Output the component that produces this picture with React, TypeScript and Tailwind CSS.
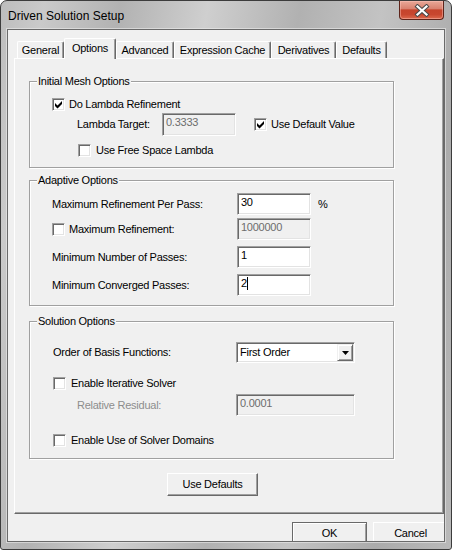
import React from 'react';

const Check = ({ checked = false }: { checked?: boolean }) => (
    <span className="relative block w-[13px] h-[13px] shrink-0 bg-white border border-t-[#a0a0a0] border-l-[#a0a0a0] border-b-white border-r-white shadow-[inset_1px_1px_0_#696969,inset_-1px_-1px_0_#e3e3e3]">
        {checked && (
            <svg className="absolute left-0 top-0" width="11" height="11" viewBox="0 0 11 11">
                <polygon points="2,4 4.5,6.5 9,2 9,5 4.5,9.5 2,7" fill="#000" />
            </svg>
        )}
    </span>
);

const Field = ({ value, className, disabled = false, caret = false }: { value: string; className: string; disabled?: boolean; caret?: boolean }) => (
    <div
        className={`flex items-start pl-[2px] leading-[14px] border border-t-[#a0a0a0] border-l-[#a0a0a0] border-b-white border-r-white shadow-[inset_1px_1px_0_#696969,inset_-1px_-1px_0_#e3e3e3] ${className} ${
            disabled ? 'bg-[#f0f0f0] text-[#6d6d6d]' : 'bg-white text-black'
        }`}
    >
        <span className="pt-[1px] pl-[1px]">{value}</span>
        {caret && <span className="mt-[2px] w-[1px] h-[13px] bg-black" />}
    </div>
);

const Button = ({ label, className, isDefault = false }: { label: string; className: string; isDefault?: boolean }) => (
    <div
        className={`flex items-center justify-center shrink-0 bg-[#f0f0f0] text-black border ${
            isDefault
                ? 'border-[#696969] shadow-[inset_1px_1px_0_#fff,inset_-1px_-1px_0_#a0a0a0]'
                : 'border-t-white border-l-white border-b-[#696969] border-r-[#696969] shadow-[inset_-1px_-1px_0_#a0a0a0]'
        } ${className}`}
    >
        {label}
    </div>
);

const Group = ({ title, className, children }: { title: string; className: string; children: React.ReactNode }) => (
    <div className={`relative ml-[14px] w-[365px] border border-[#a0a0a0] shadow-[inset_1px_1px_0_#fff,1px_1px_0_#fff] flex flex-col ${className}`}>
        <span className="absolute -top-[7px] left-[7px] px-[1px] bg-[#f0f0f0] leading-[13px]">{title}</span>
        {children}
    </div>
);

const tabs = [
    { label: 'General', w: 'w-[47px]' },
    { label: 'Options', w: 'w-[52px]', active: true },
    { label: 'Advanced', w: 'w-[58px]' },
    { label: 'Expression Cache', w: 'w-[97px]' },
    { label: 'Derivatives', w: 'w-[65px]' },
    { label: 'Defaults', w: 'w-[51px]' },
];

export default function App() {
    return (
        <div className="w-[452px] h-[550px] overflow-hidden bg-white">
            <div className="w-[452px] h-[550px] flex flex-col border border-[#3c3c3c] rounded-t-[7px] rounded-b-[3px] bg-[linear-gradient(100deg,#bdbdbd_0%,#cacaca_8%,#b2b2b2_22%,#cfcfcf_38%,#b1b1b1_55%,#c3c3c3_70%,#ababab_86%,#b9b9b9_100%)] font-['Liberation_Sans',Arial,sans-serif] text-[11px] tracking-[-0.25px] text-black">
                {/* title bar */}
                <div className="h-[28px] shrink-0 flex items-start justify-between">
                    <span className="ml-[7px] mt-[7px] text-[12px] leading-[16px] tracking-normal text-black">Driven Solution Setup</span>
                    <div className="mr-[7px] w-[45px] h-[19px] flex items-center justify-center rounded-b-[4px] border border-t-0 border-[#5e241a] bg-[linear-gradient(180deg,#e9a898_0%,#d98270_42%,#c5442c_50%,#c8472f_75%,#db6a4e_100%)] shadow-[inset_0_0_0_1px_rgba(255,200,190,0.45)]">
                        <svg width="16" height="13" viewBox="0 0 16 13">
                            <path d="M3.5 2.5 L12.5 10.5 M12.5 2.5 L3.5 10.5" stroke="#4a4a4a" strokeWidth="4.2" strokeLinecap="square" />
                            <path d="M3.5 2.5 L12.5 10.5 M12.5 2.5 L3.5 10.5" stroke="#fff" strokeWidth="2.2" strokeLinecap="square" />
                        </svg>
                    </div>
                </div>

                {/* client area */}
                <div className="flex-1 mx-[6px] mb-[7px] border border-[#6a6a6a] bg-[#f0f0f0] overflow-hidden flex flex-col pt-[8px] shadow-[0_0_0_1px_rgba(235,235,235,0.6)]">
                    {/* tab headers */}
                    <div className="h-[20px] pl-[9px] flex items-end shrink-0">
                        {tabs.map((t) =>
                            t.active ? (
                                <div
                                    key={t.label}
                                    className={`relative z-10 -mb-[1px] h-[21px] ${t.w} shrink-0 bg-[#f0f0f0] border-t border-l border-r border-t-white border-l-white border-r-[#696969] rounded-t-[2px] shadow-[inset_-1px_0_0_#a0a0a0] text-center leading-[14px] pt-[2px]`}
                                >
                                    {t.label}
                                </div>
                            ) : (
                                <div
                                    key={t.label}
                                    className={`h-[17px] ${t.w} shrink-0 border-t border-l border-r border-t-white border-l-white border-r-[#696969] rounded-t-[2px] shadow-[inset_-1px_0_0_#a0a0a0] text-center leading-[14px] pt-[1px]`}
                                >
                                    {t.label}
                                </div>
                            )
                        )}
                    </div>

                    {/* tab panel */}
                    <div className="ml-[6px] h-[456px] shrink-0 bg-[#f0f0f0] border border-t-white border-l-white border-b-[#696969] border-r-[#696969] shadow-[inset_-1px_-1px_0_#a0a0a0] flex flex-col">
                        <Group title="Initial Mesh Options" className="mt-[22px] h-[87px]">
                            <div className="mt-[15px] h-[14px] pl-[22px] flex items-center">
                                <Check checked />
                                <span className="ml-[4px]">Do Lambda Refinement</span>
                            </div>
                            <div className="mt-[2px] h-[23px] pl-[47px] flex items-center">
                                <span className="w-[85px] shrink-0">Lambda Target:</span>
                                <Field value="0.3333" className="w-[74px] h-[23px]" disabled />
                                <span className="ml-[18px]">
                                    <Check checked />
                                </span>
                                <span className="ml-[4px]">Use Default Value</span>
                            </div>
                            <div className="mt-[7px] h-[14px] pl-[48px] flex items-center">
                                <Check />
                                <span className="ml-[5px]">Use Free Space Lambda</span>
                            </div>
                        </Group>

                        <Group title="Adaptive Options" className="mt-[12px] h-[126px]">
                            <div className="mt-[12px] h-[22px] pl-[22px] flex items-center">
                                <span className="w-[185px] shrink-0">Maximum Refinement Per Pass:</span>
                                <Field value="30" className="w-[74px] h-[22px]" />
                                <span className="ml-[7px]">%</span>
                            </div>
                            <div className="mt-[3px] h-[22px] pl-[22px] flex items-center">
                                <div className="w-[185px] shrink-0 flex items-center">
                                    <Check />
                                    <span className="ml-[4px]">Maximum Refinement:</span>
                                </div>
                                <Field value="1000000" className="w-[74px] h-[22px]" disabled />
                            </div>
                            <div className="mt-[6px] h-[22px] pl-[22px] flex items-center">
                                <span className="w-[185px] shrink-0">Minimum Number of Passes:</span>
                                <Field value="1" className="w-[74px] h-[22px]" />
                            </div>
                            <div className="mt-[6px] h-[22px] pl-[22px] flex items-center">
                                <span className="w-[185px] shrink-0">Minimum Converged Passes:</span>
                                <Field value="2" className="w-[74px] h-[22px]" caret />
                            </div>
                        </Group>

                        <Group title="Solution Options" className="mt-[15px] h-[138px]">
                            <div className="mt-[20px] h-[21px] pl-[23px] flex items-center">
                                <span className="w-[183px] shrink-0">Order of Basis Functions:</span>
                                <div className="w-[119px] h-[21px] flex bg-white border border-t-[#a0a0a0] border-l-[#a0a0a0] border-b-white border-r-white shadow-[inset_1px_1px_0_#696969,inset_-1px_-1px_0_#e3e3e3] p-[1px]">
                                    <span className="flex-1 pl-[2px] leading-[16px]">First Order</span>
                                    <div className="w-[16px] h-full flex items-center justify-center bg-[#f0f0f0] border border-t-[#f0f0f0] border-l-[#f0f0f0] border-b-[#696969] border-r-[#696969] shadow-[inset_1px_1px_0_#fff,inset_-1px_-1px_0_#a0a0a0]">
                                        <svg width="7" height="4" viewBox="0 0 7 4">
                                            <polygon points="0,0 7,0 3.5,4" fill="#000" />
                                        </svg>
                                    </div>
                                </div>
                            </div>
                            <div className="mt-[13px] h-[14px] pl-[23px] flex items-center">
                                <Check />
                                <span className="ml-[5px]">Enable Iterative Solver</span>
                            </div>
                            <div className="mt-[4px] h-[22px] pl-[47px] flex items-center">
                                <span className="w-[159px] shrink-0 text-[#8d8d8d]">Relative Residual:</span>
                                <Field value="0.0001" className="w-[119px] h-[22px]" disabled />
                            </div>
                            <div className="mt-[17px] h-[14px] pl-[23px] flex items-center">
                                <Check />
                                <span className="ml-[5px]">Enable Use of Solver Domains</span>
                            </div>
                        </Group>

                        <div className="mt-[14px] ml-[152px]">
                            <Button label="Use Defaults" className="w-[91px] h-[23px]" />
                        </div>
                    </div>

                    {/* dialog buttons */}
                    <div className="mt-[8px] ml-[284px] flex gap-[6px] shrink-0">
                        <Button label="OK" className="w-[75px] h-[23px]" isDefault />
                        <Button label="Cancel" className="w-[75px] h-[23px]" />
                    </div>
                </div>
            </div>
        </div>
    );
}
